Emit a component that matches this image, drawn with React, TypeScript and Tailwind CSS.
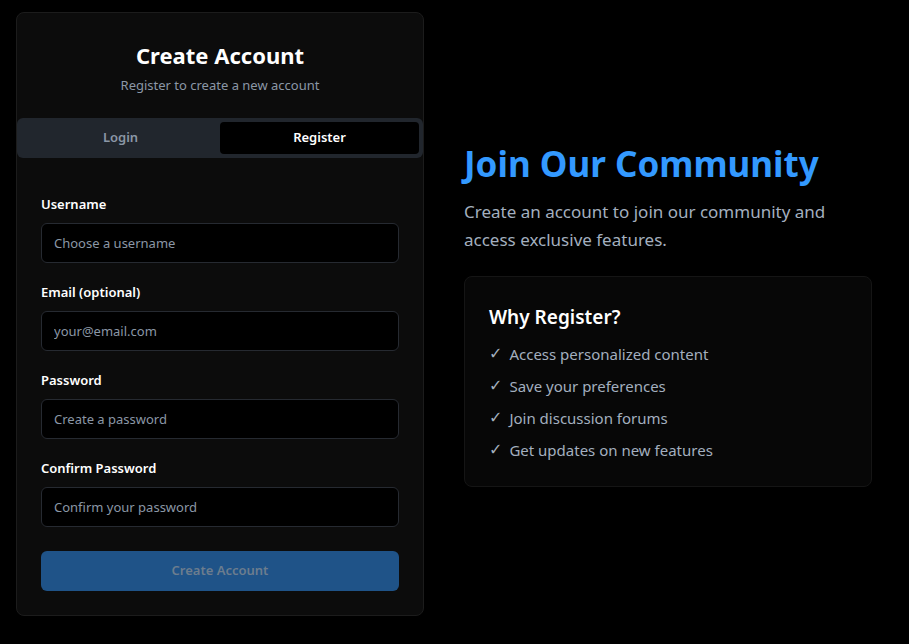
import React, { useState } from 'react';

const fields = [
  { label: 'Username', placeholder: 'Choose a username', type: 'text' },
  { label: 'Email (optional)', placeholder: 'your@email.com', type: 'email' },
  { label: 'Password', placeholder: 'Create a password', type: 'password' },
  { label: 'Confirm Password', placeholder: 'Confirm your password', type: 'password' },
];

const perks = [
  'Access personalized content',
  'Save your preferences',
  'Join discussion forums',
  'Get updates on new features',
];

const App: React.FC = () => {
  const [tab, setTab] = useState<'login' | 'register'>('register');

  return (
    <div className="min-h-screen bg-black font-['Noto_Sans',sans-serif] text-white">
      <div className="flex items-center gap-10 px-4 py-3">
        {/* Auth card */}
        <div className="w-[408px] shrink-0 rounded-lg border border-[#1c1c1c] bg-[#0c0c0c]">
          <div className="flex flex-col items-center pt-[27px] pb-[23px]">
            <h1 className="text-[22px] font-bold leading-[30px]">Create Account</h1>
            <p className="mt-[5px] text-[13px] leading-5 text-[#8b97a6]">Register to create a new account</p>
          </div>

          {/* Tabs */}
          <div className="flex rounded-md bg-[#21262d] p-[4px]">
            <button
              onClick={() => setTab('login')}
              className={`h-8 flex-1 rounded text-[13px] font-semibold ${tab === 'login' ? 'bg-black text-white' : 'text-[#8b97a6]'}`}
            >
              Login
            </button>
            <button
              onClick={() => setTab('register')}
              className={`h-8 flex-1 rounded text-[13px] font-semibold ${tab === 'register' ? 'bg-black text-white' : 'text-[#8b97a6]'}`}
            >
              Register
            </button>
          </div>

          <form className="flex flex-col gap-5 px-6 pt-[37px] pb-6" onSubmit={(e) => e.preventDefault()}>
            {fields.map((f) => (
              <div key={f.label} className="flex flex-col gap-[10px]">
                <label className="text-[13px] font-semibold leading-[18px] text-white">{f.label}</label>
                <input
                  type={f.type}
                  placeholder={f.placeholder}
                  className="h-10 w-full rounded-md border border-[#262a31] bg-black px-3 text-[13px] text-white placeholder:text-[#8b97a6] outline-none"
                />
              </div>
            ))}
            <button
              type="submit"
              disabled
              className="mt-1 h-10 w-full rounded-md bg-[#1f5388] text-[13px] font-semibold text-[#6c7d8e]"
            >
              Create Account
            </button>
          </form>
        </div>

        {/* Info */}
        <div className="w-[408px]">
          <h2 className="text-[35px] font-bold leading-[44px] text-[#3399ff]">Join Our Community</h2>
          <p className="mt-[12px] text-[17px] leading-[28px] text-[#a3afbf]">
            Create an account to join our community and access exclusive features.
          </p>
          <div className="mt-[22px] rounded-lg border border-[#151515] bg-[#070707] px-6 pt-[26px] pb-6">
            <h3 className="text-[19px] font-semibold leading-7 text-white">Why Register?</h3>
            <ul className="mt-[11px] flex flex-col gap-[8px]">
              {perks.map((p) => (
                <li key={p} className="flex items-center text-[15px] leading-6 text-[#a3afbf]">
                  <span className="mr-[7px] font-['DejaVu_Sans',sans-serif] text-[16px]">✓</span>
                  {p}
                </li>
              ))}
            </ul>
          </div>
        </div>
      </div>
    </div>
  );
};

export default App;
